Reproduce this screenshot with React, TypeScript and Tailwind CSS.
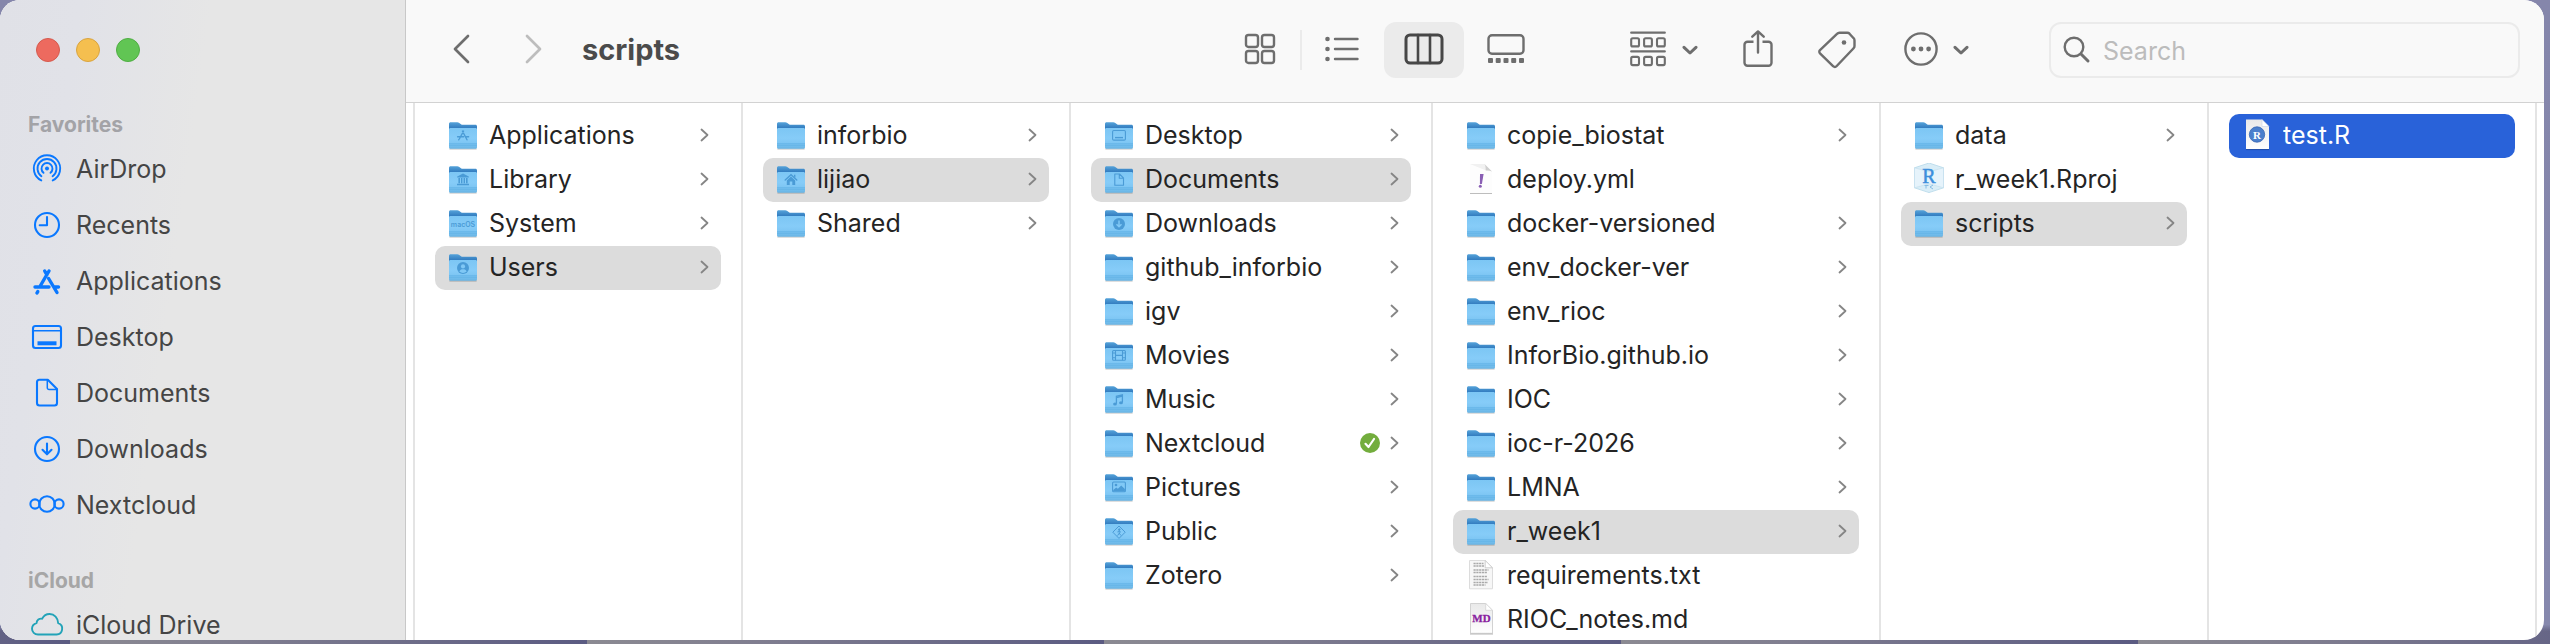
import React from "react";

type Glyph =
  | "apps"
  | "library"
  | "macos"
  | "user"
  | "home"
  | "desktop"
  | "document"
  | "download"
  | "movie"
  | "music"
  | "picture"
  | "public";

type Kind = "folder" | "yml" | "txt" | "md" | "rproj" | "r";

interface Entry {
  name: string;
  kind?: Kind;
  glyph?: Glyph;
  state?: "path" | "active";
  synced?: boolean;
}

const columns: { id: string; width: string; entries: Entry[] }[] = [
  {
    id: "Macintosh HD",
    width: "w-[328px]",
    entries: [
      { name: "Applications", glyph: "apps" },
      { name: "Library", glyph: "library" },
      { name: "System", glyph: "macos" },
      { name: "Users", glyph: "user", state: "path" },
    ],
  },
  {
    id: "Users",
    width: "w-[328px]",
    entries: [
      { name: "inforbio" },
      { name: "lijiao", glyph: "home", state: "path" },
      { name: "Shared" },
    ],
  },
  {
    id: "lijiao",
    width: "w-[362px]",
    entries: [
      { name: "Desktop", glyph: "desktop" },
      { name: "Documents", glyph: "document", state: "path" },
      { name: "Downloads", glyph: "download" },
      { name: "github_inforbio" },
      { name: "igv" },
      { name: "Movies", glyph: "movie" },
      { name: "Music", glyph: "music" },
      { name: "Nextcloud", synced: true },
      { name: "Pictures", glyph: "picture" },
      { name: "Public", glyph: "public" },
      { name: "Zotero" },
    ],
  },
  {
    id: "Documents",
    width: "w-[448px]",
    entries: [
      { name: "copie_biostat" },
      { name: "deploy.yml", kind: "yml" },
      { name: "docker-versioned" },
      { name: "env_docker-ver" },
      { name: "env_rioc" },
      { name: "InforBio.github.io" },
      { name: "IOC" },
      { name: "ioc-r-2026" },
      { name: "LMNA" },
      { name: "r_week1", state: "path" },
      { name: "requirements.txt", kind: "txt" },
      { name: "RIOC_notes.md", kind: "md" },
    ],
  },
  {
    id: "r_week1",
    width: "w-[328px]",
    entries: [
      { name: "data" },
      { name: "r_week1.Rproj", kind: "rproj" },
      { name: "scripts", state: "path" },
    ],
  },
  {
    id: "scripts",
    width: "w-[328px]",
    entries: [{ name: "test.R", kind: "r", state: "active" }],
  },
];

/* ---------- file and folder icons ---------- */

function FolderGlyph({ glyph }: { glyph: Glyph }) {
  const c = "#4a9bd6";
  switch (glyph) {
    case "apps":
      return (
        <g stroke={c} strokeWidth="1.4" strokeLinecap="round">
          <path d="M14.6 10 10.600 17.500M13.400 10l4.600 8.800M8.600 15.800h6M17.600 15.800h2M9.700 18.800l.3-.5" />
        </g>
      );
    case "library":
      return (
        <path
          fill={c}
          d="M14 8.600 8.200 11.400v1h11.600v-1zM9.400 13h1.600v5.200H9.400zM12 13h1.400v5.200H12zM14.600 13H16v5.200h-1.400zM17 13h1.600v5.200H17zM8 18.800h12v1.400H8z"
        />
      );
    case "macos":
      return (
        <text x="14" y="18" textAnchor="middle" fontSize="7" fontWeight="600" fill={c}>
          macOS
        </text>
      );
    case "user":
      return (
        <g>
          <circle cx="14" cy="15" r="6" fill={c} />
          <circle cx="14" cy="13.400" r="2.100" fill="#80c8f5" />
          <path fill="#80c8f5" d="M10.300 18.600c.7-1.700 2-2.300 3.700-2.300s3 .6 3.700 2.300A5.600 5.600 0 0 1 14 20a5.600 5.600 0 0 1-3.700-1.400z" />
        </g>
      );
    case "home":
      return (
        <g>
          <path stroke={c} strokeWidth="1.400" strokeLinecap="round" d="m8.200 15 5.800-5.200 5.800 5.200" />
          <path fill={c} d="M17 9.800h1.400v3L17 11.600zM9.800 15.400l4.200-3.800 4.200 3.800v4.600h-2.900v-3.600h-2.600V20H9.800z" />
        </g>
      );
    case "desktop":
      return (
        <g stroke={c} strokeWidth="1.100">
          <rect x="7.600" y="9.500" width="12.800" height="9.600" rx="1.200" />
          <path d="M10 16.600h8" strokeWidth="1.400" />
        </g>
      );
    case "document":
      return (
        <path
          stroke={c}
          strokeWidth="1.100"
          strokeLinejoin="round"
          d="M9.800 9h4.700l4 4v7.300H9.800zM14.300 9v4.200h4.200"
        />
      );
    case "download":
      return (
        <g>
          <circle cx="14" cy="15" r="6" fill={c} />
          <path stroke="#80c8f5" strokeWidth="1.500" d="M14 11.600v6M11.500 15.300l2.500 2.500 2.500-2.500" />
        </g>
      );
    case "movie":
      return (
        <g stroke={c} strokeWidth="1.100">
          <rect x="7.600" y="9.500" width="12.800" height="9.800" rx="1" />
          <path d="M10.500 9.500v9.800M17.500 9.500v9.800M10.500 14.400h7M7.600 12h2.900M7.600 16.800h2.900M17.500 12h2.900M17.500 16.800h2.900" />
        </g>
      );
    case "music":
      return (
        <g>
          <path stroke={c} strokeWidth="1.300" d="M11.400 18.800v-7.600l6-1.400v7.700M11.400 12.600l6-1.400" />
          <ellipse cx="10" cy="19" rx="1.900" ry="1.500" fill={c} />
          <ellipse cx="16" cy="17.800" rx="1.900" ry="1.500" fill={c} />
        </g>
      );
    case "picture":
      return (
        <g>
          <rect x="7.600" y="9" width="12.800" height="9.800" rx="1" stroke={c} strokeWidth="1.100" />
          <circle cx="11" cy="12" r="1.300" fill={c} />
          <path fill={c} d="m8.200 17 3-2.400 1.700 1.200 3.300-3.200 3.700 3.500v2.200H8.200z" />
        </g>
      );
    case "public":
      return (
        <g stroke={c} strokeWidth="1">
          <path d="m14 9 6.200 6.200L14 21.400l-6.200-6.200z" strokeLinejoin="round" />
          <circle cx="14.300" cy="12.500" r=".7" fill={c} />
          <path d="M14.200 13.600v2.600l-1.600 2.400M14.200 16l1.500 2.400M12.400 15l1.800-1.200 1.700 1.500" />
        </g>
      );
  }
}

function FolderIcon({ glyph }: { glyph?: Glyph }) {
  return (
    <svg width="30" height="32" viewBox="-1 -2 30 32" fill="none" aria-hidden="true" className="shrink-0">
      <path d="M.4 27.200h27.200v1.400H.4z" fill="#000" opacity=".22" />
      <path
        d="M0 2.800C0 1.800.7 1.200 1.600 1.200h6.600c.9 0 1.500.2 2.100.7l1.700 1.300c.5.400 1 .5 1.700.5h12.700c1 0 1.600.6 1.600 1.600V12H0z"
        fill="url(#folder-back)"
      />
      <path
        d="M0 8.400C0 7.400.6 6.900 1.500 6.900h25c.9 0 1.500.5 1.500 1.500v17.800c0 .9-.6 1.500-1.500 1.500h-25C.6 27.700 0 27.100 0 26.200z"
        fill="url(#folder-front)"
      />
      <path d="M0 22.700h28M0 24.300h28" stroke="#5fb0e4" strokeWidth=".7" />
      {glyph && <FolderGlyph glyph={glyph} />}
    </svg>
  );
}

function SharedGradients() {
  return (
    <svg width="0" height="0" className="absolute" aria-hidden="true">
      <defs>
        <linearGradient id="folder-back" x1="0" y1="0" x2="0" y2="1">
          <stop offset="0" stopColor="#55a3da" />
          <stop offset=".6" stopColor="#2f78bd" />
        </linearGradient>
        <linearGradient id="folder-front" x1="0" y1="0" x2="0" y2="1">
          <stop offset="0" stopColor="#7cc6f4" />
          <stop offset=".5" stopColor="#86ccf8" />
          <stop offset=".75" stopColor="#7dc5f3" />
          <stop offset="1" stopColor="#68b4e4" />
        </linearGradient>
        <linearGradient id="page" x1="0" y1="0" x2="0" y2="1">
          <stop offset="0" stopColor="#e9e9e9" />
          <stop offset="1" stopColor="#ffffff" />
        </linearGradient>
      </defs>
    </svg>
  );
}

function FileIcon({ kind }: { kind: Kind }) {
  const frame = { width: 30, height: 32, viewBox: "0 0 30 32", fill: "none", "aria-hidden": true, className: "shrink-0" };
  switch (kind) {
    case "yml":
      return (
        <svg {...frame}>
          <path d="M4 1h14.500L26 8.500V30H4z" fill="#fdfdfd" />
          <path d="M4 1h14.500L26 8.500 19 7z" fill="#f1f1f1" />
          <path d="M18.500 1 26 8.500c-2-1.200-4.500-1-6.300-1 0-2.500 0-4.500-1.200-6.500z" fill="#cfcfcf" />
          <path d="M4 30.500h22" stroke="#bdbdbd" />
          <path d="M14 11h3.600l-1.700 10h-2z" fill="#8a5fb4" />
          <circle cx="14.300" cy="23.300" r="1.500" fill="#8a5fb4" />
        </svg>
      );
    case "txt":
      return (
        <svg {...frame}>
          <path d="M3.500 1.500h15.700l7.300 7.300v21h-23z" fill="#f7f7f7" stroke="#dcdcdc" />
          <path d="M19.200 1.500v7.300h7.300z" fill="#fff" stroke="#c4c4c4" strokeWidth=".8" />
          <g stroke="#a9a9a9" strokeWidth="1.300" strokeDasharray="2.200 .6">
            <path d="M7.500 4.500h10M7.500 7h10.500M7.500 11h15M7.500 13.500h14M7.500 17.500h14M7.500 20.500h15M7.500 23.500h14.500M7.500 26h12" />
          </g>
        </svg>
      );
    case "md":
      return (
        <svg {...frame}>
          <path d="M4.500.5h15.200l6.800 6.800v23h-22z" fill="url(#page)" stroke="#d2d2d2" />
          <path d="M19.700.5v6.800h6.800z" fill="#fff" stroke="#d0d0d0" strokeWidth=".7" />
          <path d="M4 31h23" stroke="#b5b5b5" />
          <text
            x="15.500"
            y="18.500"
            textAnchor="middle"
            fontSize="11"
            fontWeight="700"
            fill="#8a1fa0"
            stroke="#8a1fa0"
            strokeWidth=".3"
            className="font-['Liberation_Serif',serif]"
          >
            MD
          </text>
        </svg>
      );
    case "rproj":
      return (
        <svg {...frame}>
          <path d="M15 0 29.500 4.800v20L15 29.600.5 24.800v-20z" fill="#d9edf7" stroke="#b5d8e8" strokeWidth=".8" />
          <path d="M.5 4.800 15 8.800l14.500-4v20L15 20.800.5 24.800z" fill="#e6f3fb" stroke="#c4e0ee" strokeWidth=".7" />
          <text x="15" y="19.500" textAnchor="middle" fontSize="20" fill="#3d8fdc" stroke="#3d8fdc" strokeWidth=".5" className="font-['Liberation_Serif',serif]">
            R
          </text>
          <path d="M10.500 22.500h4M12 22.500v3M19 22l-3 2 3 2" stroke="#86bde4" />
        </svg>
      );
    case "r":
      return (
        <svg {...frame}>
          <path d="M4 .5h16l7 7V30H4z" fill="url(#page)" />
          <path d="M20 .5v7h7z" fill="#fff" stroke="#c8d2e4" strokeWidth=".6" />
          <path d="M4 30.600h23" stroke="#1d3f86" strokeWidth="1" opacity=".6" />
          <circle cx="15" cy="15.500" r="7.700" fill="#4a7fcc" stroke="#3766b4" strokeWidth=".8" />
          <text x="15" y="19.500" textAnchor="middle" fontSize="11" fontWeight="700" fill="#fff" className="font-['Liberation_Serif',serif]">
            R
          </text>
        </svg>
      );
    default:
      return <FolderIcon />;
  }
}

/* ---------- browser rows ---------- */

function EntryRow({ entry }: { entry: Entry }) {
  const kind = entry.kind ?? "folder";
  const tone =
    entry.state === "active"
      ? "bg-[#2962d9] text-white"
      : entry.state === "path"
        ? "bg-[#dcdcdc] text-[#242424]"
        : "text-[#242424]";
  return (
    <li>
      <button type="button" className={`flex h-11 w-full items-center rounded-[10px] pr-3 pb-0.5 pl-[13px] text-left ${tone}`}>
        {kind === "folder" ? <FolderIcon glyph={entry.glyph} /> : <FileIcon kind={kind} />}
        <span className="ml-[11px] flex-1 truncate text-[25px] leading-8">{entry.name}</span>
        {entry.synced && (
          <svg width="20" height="20" viewBox="0 0 20 20" fill="none" role="img" aria-label="Synced" className="mr-2.5">
            <circle cx="10" cy="10" r="10" fill="#73ad3d" />
            <path d="m5.500 10.800 3 3.200L14 6" stroke="#fff" strokeWidth="2.200" strokeLinecap="round" strokeLinejoin="round" />
          </svg>
        )}
        {kind === "folder" && (
          <svg width="9" height="14" viewBox="0 0 9 14" fill="none" aria-hidden="true" className="shrink-0">
            <path d="m1.500 1.500 6 5.500-6 5.500" stroke="#858585" strokeWidth="1.800" strokeLinecap="round" strokeLinejoin="round" />
          </svg>
        )}
      </button>
    </li>
  );
}

/* ---------- sidebar ---------- */

const favorites: { label: string; icon: React.ReactNode }[] = [
  {
    label: "AirDrop",
    icon: (
      <g strokeWidth="1.900">
        <circle cx="18" cy="17.500" r="2" fill="currentColor" stroke="none" />
        <path d="M12.300 29.400a13.200 13.200 0 1 1 11.400 0" />
        <path d="M12.400 25.200a9.500 9.500 0 1 1 11.200 0" />
        <path d="M14.500 21.800a5.500 5.500 0 1 1 7 0" />
      </g>
    ),
  },
  {
    label: "Recents",
    icon: (
      <>
        <circle cx="18" cy="18" r="12" />
        <path d="M18 10v8.300h-7.300" />
      </>
    ),
  },
  {
    label: "Applications",
    icon: (
      <g strokeWidth="3.400">
        <path d="m20 8-8.500 14.500M15.700 8l2.200 3.800M19.600 15.500l8.400 14M6 24h14M25.500 24h4" />
        <path d="m8.800 28.500-.8 1.500" />
      </g>
    ),
  },
  {
    label: "Desktop",
    icon: (
      <>
        <rect x="4" y="7" width="28" height="22" rx="2.500" />
        <path d="M4 11.800h28" strokeWidth="1.500" />
        <path d="M8.500 24.300h19" strokeWidth="4" strokeLinecap="butt" />
      </>
    ),
  },
  {
    label: "Documents",
    icon: (
      <>
        <path d="M10.500 4.800h8.300l9.200 9.200v14a2.500 2.500 0 0 1-2.500 2.500h-15A2.500 2.500 0 0 1 8 28V7.300a2.500 2.500 0 0 1 2.500-2.500z" />
        <path d="M18.300 5v7.700a1.800 1.800 0 0 0 1.800 1.800H28" strokeWidth="1.500" />
      </>
    ),
  },
  {
    label: "Downloads",
    icon: (
      <>
        <circle cx="18" cy="18" r="12" />
        <path d="M18 12.500v10.300M13.500 18.800l4.500 4.500 4.500-4.500" />
      </>
    ),
  },
  {
    label: "Nextcloud",
    icon: (
      <>
        <circle cx="18" cy="17" r="7.800" />
        <circle cx="6" cy="17" r="4.600" />
        <circle cx="30" cy="17" r="4.600" />
      </>
    ),
  },
];

function SidebarItem({ label, tint, children }: { label: string; tint: string; children: React.ReactNode }) {
  return (
    <li>
      <a href="#" className="flex h-14 items-center gap-[10px] text-[25px] leading-8 text-[#454545]">
        <svg
          width="38"
          height="36"
          viewBox="-1 0 38 36"
          fill="none"
          stroke="currentColor"
          strokeWidth="2.100"
          strokeLinecap="round"
          strokeLinejoin="round"
          aria-hidden="true"
          className={`shrink-0 ${tint}`}
        >
          {children}
        </svg>
        {label}
      </a>
    </li>
  );
}

function Sidebar() {
  return (
    <aside className="w-[406px] shrink-0 overflow-hidden border-r border-[#c8c8c8] bg-[#e6e6e6] bg-[linear-gradient(98deg,#e0e1e7_0,#e1e2e8_80px,#e6e6e6_210px)] px-7">
      <div className="mt-[38px] ml-2 flex gap-4">
        <button type="button" aria-label="Close" className="size-6 rounded-full border border-[#d55a4e] bg-[#ed6a5f]" />
        <button type="button" aria-label="Minimize" className="size-6 rounded-full border border-[#d9a440] bg-[#f5bf4f]" />
        <button type="button" aria-label="Zoom" className="size-6 rounded-full border border-[#4fae43] bg-[#61c554]" />
      </div>
      <nav aria-label="Sidebar">
        <h2 className="mt-[49px] text-[21px] leading-7 font-bold text-[#a3a3a7]">Favorites</h2>
        <ul className="mt-0.5">
          {favorites.map((item) => (
            <SidebarItem key={item.label} label={item.label} tint="text-[#0a78ff]">
              {item.icon}
            </SidebarItem>
          ))}
        </ul>
        <h2 className="mt-[34px] text-[21px] leading-7 font-bold text-[#a6a6a6]">iCloud</h2>
        <ul className="mt-0.5">
          <SidebarItem label="iCloud Drive" tint="text-[#23a3b8]">
            <path
              d="M9 27.500h18.500a5.800 5.800 0 0 0 1.700-11.300C29 11 25.300 7 20.600 7c-3.500 0-6 1.900-7.400 4.700-3-.6-5.400 1.400-5.700 4.500A6 6 0 0 0 3 21.800C3 25 5.600 27.500 9 27.500z"
              strokeWidth="1.900"
            />
          </SidebarItem>
        </ul>
      </nav>
    </aside>
  );
}

/* ---------- toolbar ---------- */

function ToolIcon({ width, height = 40, children }: { width: number; height?: number; children: React.ReactNode }) {
  return (
    <svg
      width={width}
      height={height}
      viewBox={`0 0 ${width} ${height}`}
      fill="none"
      stroke="currentColor"
      strokeWidth="2.400"
      strokeLinecap="round"
      strokeLinejoin="round"
      aria-hidden="true"
    >
      {children}
    </svg>
  );
}

function MenuChevron() {
  return (
    <ToolIcon width={16}>
      <path d="m2 17.300 6 5.700 6-5.700" strokeWidth="3" />
    </ToolIcon>
  );
}

function Toolbar() {
  const view = "flex h-14 w-20 items-center justify-center rounded-xl";
  return (
    <header className="flex h-[103px] shrink-0 items-center border-b border-[#d2d2d2] bg-[#f9f9f9] pr-6 pb-0.5 pl-[46px] text-[#6e6e6e]">
      <button type="button" aria-label="Back">
        <ToolIcon width={18}>
          <path d="M16 6 3 19l13 13" strokeWidth="2.700" />
        </ToolIcon>
      </button>
      <button type="button" aria-label="Forward" className="ml-[55px] text-[#bdbdbd]">
        <ToolIcon width={18}>
          <path d="m2 6 13 13L2 32" strokeWidth="2.700" />
        </ToolIcon>
      </button>
      <h1 className="ml-[39px] flex-1 text-[29px] leading-9 font-bold text-[#4b4b4b]">scripts</h1>

      <div role="group" aria-label="View" className="flex items-center">
        <button type="button" aria-label="Icons" className={view}>
          <ToolIcon width={32}>
            <rect x="2" y="5" width="12" height="12" rx="2.500" />
            <rect x="18" y="5" width="12" height="12" rx="2.500" />
            <rect x="2" y="21" width="12" height="12" rx="2.500" />
            <rect x="18" y="21" width="12" height="12" rx="2.500" />
          </ToolIcon>
        </button>
        <span className="h-10 w-0.5 bg-[#ebebeb]" />
        <button type="button" aria-label="List" className={view}>
          <ToolIcon width={36}>
            <path d="M11 9h22.500M11 19h22.500M11 29h22.500" />
            <g fill="currentColor" stroke="none">
              <circle cx="3.500" cy="9" r="2.300" />
              <circle cx="3.500" cy="19" r="2.300" />
              <circle cx="3.500" cy="29" r="2.300" />
            </g>
          </ToolIcon>
        </button>
        <button type="button" aria-label="Columns" aria-pressed="true" className={`${view} ml-0.5 bg-[#ebebeb] text-[#474747]`}>
          <ToolIcon width={40}>
            <rect x="2" y="5" width="36" height="28" rx="4" strokeWidth="3" />
            <path d="M14 5v28M26 5v28" strokeWidth="2.600" />
          </ToolIcon>
        </button>
        <button type="button" aria-label="Gallery" className={`${view} ml-0.5`}>
          <ToolIcon width={40}>
            <rect x="2.500" y="5.200" width="35" height="18.600" rx="3.500" />
            <g fill="currentColor" stroke="none">
              <rect x="2" y="28" width="5" height="5" rx="1" />
              <rect x="9.700" y="28" width="5" height="5" rx="1" />
              <rect x="17.500" y="28" width="5" height="5" rx="1" />
              <rect x="25.200" y="28" width="5" height="5" rx="1" />
              <rect x="33" y="28" width="5" height="5" rx="1" />
            </g>
          </ToolIcon>
        </button>
      </div>

      <button type="button" aria-label="Group" className="ml-[84px] flex gap-4">
        <ToolIcon width={36}>
          <path d="M1.200 2.700h33.600M1.200 21.400h33.600" strokeWidth="2.200" />
          <g strokeWidth="2.100">
            <rect x="1.200" y="8.200" width="7.800" height="8.200" rx="1.500" />
            <rect x="14.100" y="8.200" width="7.800" height="8.200" rx="1.500" />
            <rect x="27" y="8.200" width="7.800" height="8.200" rx="1.500" />
            <rect x="1.200" y="26.900" width="7.800" height="8.200" rx="1.500" />
            <rect x="14.100" y="26.900" width="7.800" height="8.200" rx="1.500" />
            <rect x="27" y="26.900" width="7.800" height="8.200" rx="1.500" />
          </g>
        </ToolIcon>
        <MenuChevron />
      </button>
      <button type="button" aria-label="Share" className="ml-11">
        <ToolIcon width={32}>
          <path d="M11.500 11.700H5.500a3 3 0 0 0-3 3V32.700a3 3 0 0 0 3 3h21a3 3 0 0 0 3-3V14.700a3 3 0 0 0-3-3h-6" strokeLinecap="butt" />
          <path d="M16 22.500V2M10.300 6.700 16 1.400l5.700 5.300" />
        </ToolIcon>
      </button>
      <button type="button" aria-label="Tags" className="ml-11">
        <ToolIcon width={38}>
          <path d="M21.500 2.800h7.800a3 3 0 0 1 2.200.9l4.100 4.500a3 3 0 0 1 .9 2.200v5.600a3 3 0 0 1-.9 2.200L18.500 36.300a2.200 2.200 0 0 1-3.200 0L2 23.300a2.200 2.200 0 0 1 0-3.200L19 3.900a3.500 3.500 0 0 1 2.500-1.100z" />
          <circle cx="26" cy="12.500" r="2.300" fill="currentColor" stroke="none" />
        </ToolIcon>
      </button>
      <button type="button" aria-label="More actions" className="ml-12 flex gap-[15px]">
        <ToolIcon width={34}>
          <circle cx="17" cy="19" r="15.600" />
          <g fill="currentColor" stroke="none">
            <circle cx="9.400" cy="19" r="2.400" />
            <circle cx="17" cy="19" r="2.400" />
            <circle cx="24.600" cy="19" r="2.400" />
          </g>
        </ToolIcon>
        <MenuChevron />
      </button>

      <label className="ml-20 flex h-14 w-[471px] items-center gap-3 rounded-xl border-2 border-[#ebebeb] px-3">
        <ToolIcon width={28} height={28}>
          <circle cx="11" cy="11" r="9.300" />
          <path d="m18 18 7 7" strokeWidth="3" />
        </ToolIcon>
        <input
          type="search"
          aria-label="Search"
          placeholder="Search"
          className="h-9 min-w-0 flex-1 bg-transparent pt-1 text-[25px] text-[#454545] outline-none placeholder:text-[#bcbcbc]"
        />
      </label>
    </header>
  );
}

export default function App() {
  return (
    <div className="h-screen overflow-hidden bg-[linear-gradient(180deg,#8586ab_0%,#8688ad_97%,transparent_98%),repeating-linear-gradient(90deg,#8b8a92_70px,#807e90_240px,#5b5b82_587px)] pr-1.5 pb-1 font-[Inter,sans-serif]">
      <SharedGradients />
      <div className="flex h-full overflow-hidden rounded-[20px] bg-white">
        <Sidebar />
        <main className="flex min-w-0 flex-1 flex-col">
          <Toolbar />
          <div className="flex min-h-0 flex-1 overflow-hidden">
            <div className="w-[9px] shrink-0 border-r-2 border-[#e4e4e4]" />
            {columns.map((column) => (
              <ul
                key={column.id}
                aria-label={column.id}
                className={`shrink-0 overflow-hidden border-r-2 border-[#e4e4e4] px-5 pt-[11px] ${column.width}`}
              >
                {column.entries.map((entry) => (
                  <EntryRow key={entry.name} entry={entry} />
                ))}
              </ul>
            ))}
          </div>
        </main>
      </div>
    </div>
  );
}
